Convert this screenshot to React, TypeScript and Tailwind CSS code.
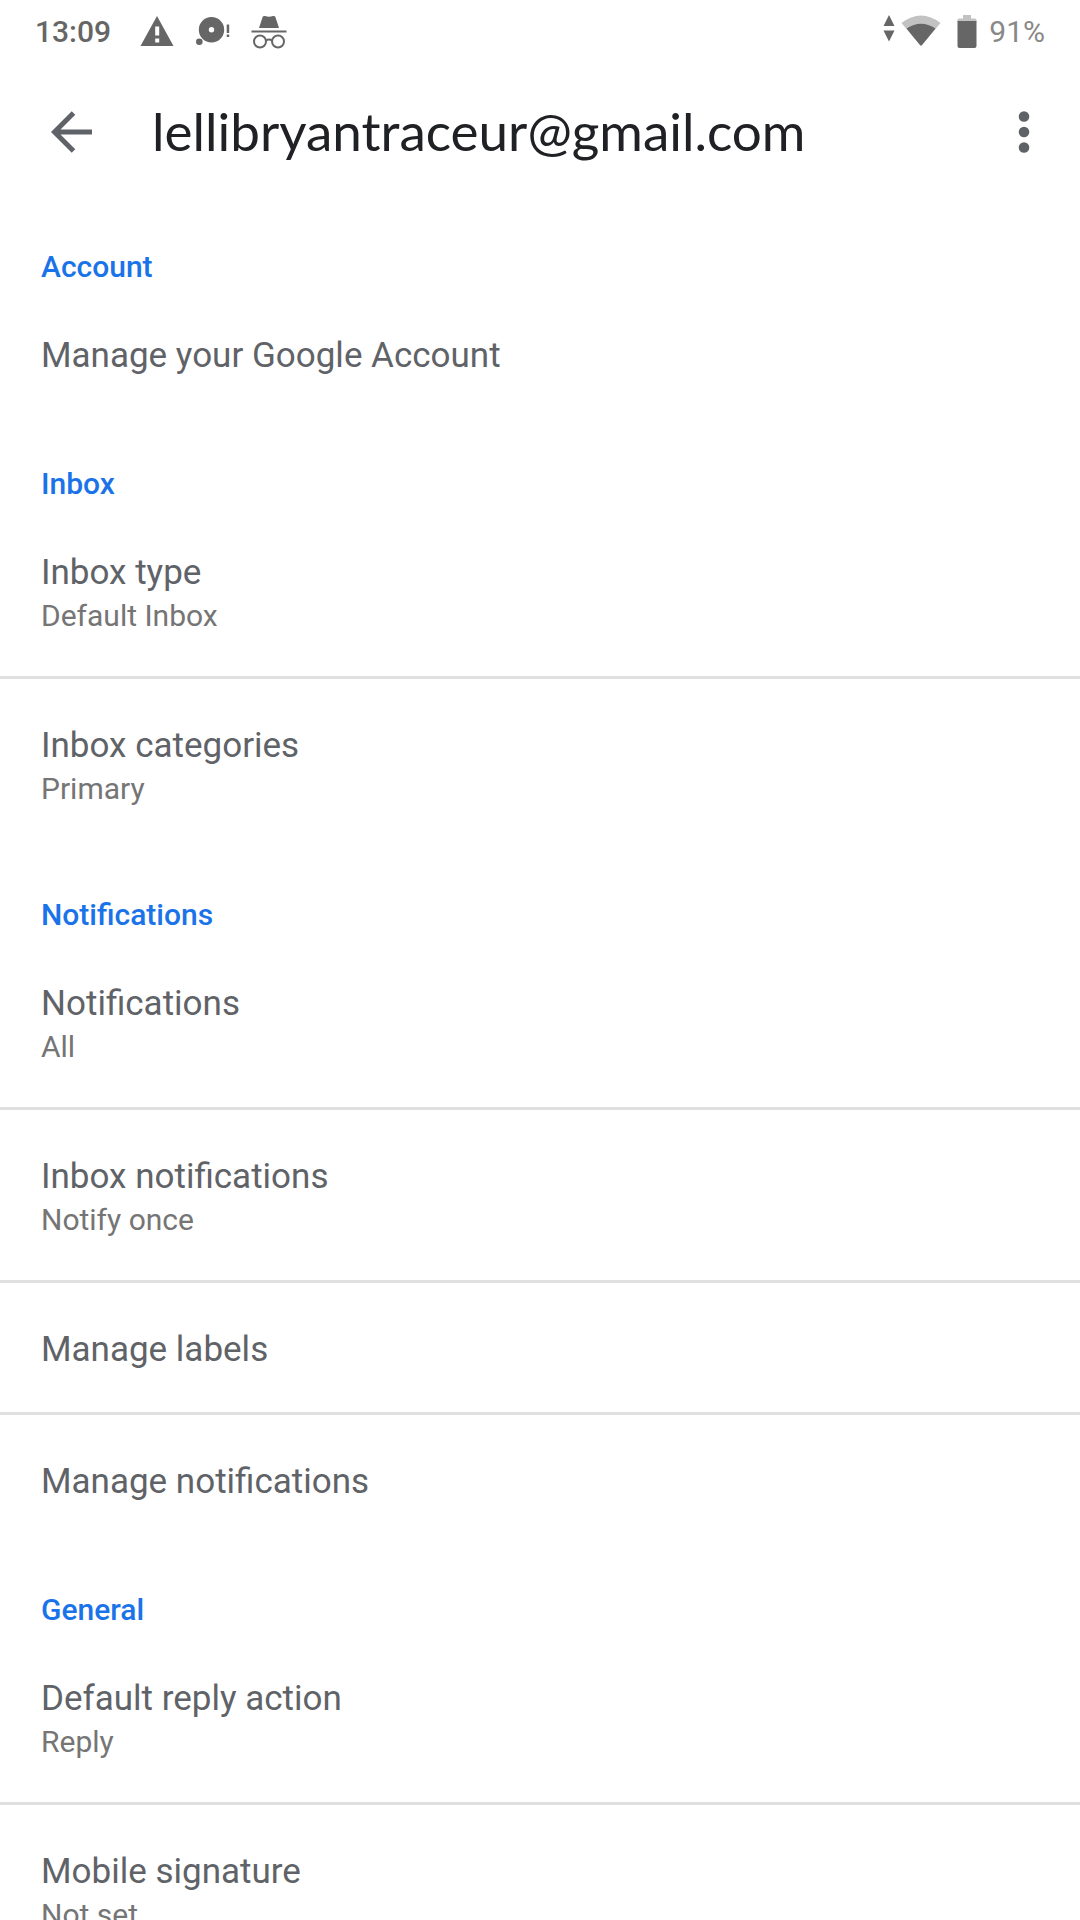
type Item = {
  title: string
  summary?: string
}

type Section = {
  heading: string
  items: Item[]
}

const sections: Section[] = [
  {
    heading: "Account",
    items: [{ title: "Manage your Google Account" }],
  },
  {
    heading: "Inbox",
    items: [
      { title: "Inbox type", summary: "Default Inbox" },
      { title: "Inbox categories", summary: "Primary" },
    ],
  },
  {
    heading: "Notifications",
    items: [
      { title: "Notifications", summary: "All" },
      { title: "Inbox notifications", summary: "Notify once" },
      { title: "Manage labels" },
      { title: "Manage notifications" },
    ],
  },
  {
    heading: "General",
    items: [
      { title: "Default reply action", summary: "Reply" },
      { title: "Mobile signature", summary: "Not set" },
    ],
  },
]

const StatusBar = () => (
  <div className="flex h-[63px] shrink-0 items-center justify-between px-[35px] text-[30px] leading-[36px] text-[#666666]">
    <div className="flex items-center">
      <span className="font-medium">13:09</span>
      <svg className="ml-[29px] h-[34px] w-[34px]" viewBox="0 0 34 34" fill="currentColor">
        <path d="M17 1 33.500 31H.5z" />
        <path d="M15.200 11.500h4v9h-4zM15.200 23.500h4v4h-4z" fill="#fff" />
      </svg>
      <svg className="ml-[22px] h-[34px] w-[34px]" viewBox="0 0 34 34" fill="currentColor">
        <path
          fillRule="evenodd"
          d="M15.500 2a12.700 12.700 0 1 1 0 25.400 12.700 12.700 0 0 1 0-25.400zm0 10a2.700 2.700 0 1 0 0 5.400 2.700 2.700 0 0 0 0-5.400z"
        />
        <circle cx="3.300" cy="26.800" r="3.300" />
        <path d="M30.700 9.500h2.500v8.500h-2.500zM30.700 19.500h2.500v2.500h-2.500z" />
      </svg>
      <svg className="ml-[21px] h-[34px] w-[36px]" viewBox="0 0 36 34" fill="none" stroke="currentColor" strokeWidth="2">
        <path
          d="M8 13 11.700 1.700Q12.500 .5 14 1.100q4 1.400 8 0 1.500-.6 2.300.6L28 13z"
          fill="currentColor"
          stroke="none"
        />
        <path d="M.5 16.500h35" />
        <circle cx="9" cy="26.500" r="6" />
        <circle cx="27" cy="26.500" r="6" />
        <path d="M15 25.500q3-1.800 6 0" />
      </svg>
    </div>
    <div className="flex items-center">
      <svg className="h-[34px] w-[12px]" viewBox="0 0 12 34" fill="currentColor">
        <path d="M6 0 11.500 11H.5zM6 26.500.5 15.500h11z" />
      </svg>
      <svg className="ml-[6px] h-[34px] w-[40px]" viewBox="0 0 40 34" fill="currentColor">
        <path d="M.5 8Q20-7 39.500 8L21 30q-1 1-2 0z" fill="#c2c2c2" />
        <path d="M5.500 13.500Q20 4 34.500 13.500L21 30q-1 1-2 0z" />
      </svg>
      <svg className="ml-4 h-[34px] w-[20px]" viewBox="0 0 20 34" fill="currentColor">
        <path d="M6 0h8v3.500h4q1.500 0 1.500 1.500v2H.5V5Q.5 3.500 2 3.500h4z" fill="#c2c2c2" />
        <path d="M.5 6h19v25q0 2-2 2h-15q-2 0-2-2z" />
      </svg>
      <span className="ml-3 text-[#888888]">91%</span>
    </div>
  </div>
)

const Toolbar = () => (
  <header className="flex h-[138px] shrink-0 items-center px-6 text-[#5f6368]">
    <button type="button" aria-label="Navigate up" className="flex h-24 w-24 items-center justify-center">
      <svg className="h-[42px] w-[42px]" viewBox="0 0 42 42" fill="none" stroke="currentColor" strokeWidth="5">
        <path d="M41 21H4M22.500 2 3.500 21l19 19" />
      </svg>
    </button>
    <h1 className="ml-8 flex-1 truncate pb-0.5 font-[Lato,sans-serif] text-[53px] leading-[72px] text-[#202124]">
      lellibryantraceur@gmail.com
    </h1>
    <button type="button" aria-label="More options" className="flex h-24 w-16 items-center justify-center">
      <svg className="h-[42px] w-[12px]" viewBox="0 0 12 42" fill="currentColor">
        <circle cx="6" cy="5.500" r="5.300" />
        <circle cx="6" cy="21" r="5.300" />
        <circle cx="6" cy="36.500" r="5.300" />
      </svg>
    </button>
  </header>
)

const SettingItem = ({ title, summary }: Item) => (
  <li>
    <button
      type="button"
      className={`block w-full px-[41px] pt-[45px] text-left ${summary ? "pb-[39px]" : "pb-10"}`}
    >
      <span className="block text-[35px] leading-[44px] text-[#5f6368]">{title}</span>
      {summary && <span className="block text-[30px] leading-[42px] text-[#757575]">{summary}</span>}
    </button>
  </li>
)

const App = () => {
  return (
    <div className="flex h-screen flex-col bg-white font-[Roboto,sans-serif]">
      <StatusBar />
      <Toolbar />
      <main className="min-h-0 flex-1 overflow-y-auto [scrollbar-width:none]">
        {sections.map((section) => (
          <section key={section.heading}>
            <h2 className="px-[41px] pt-11 text-[30px] font-medium leading-[44px] text-[#1a73e8]">
              {section.heading}
            </h2>
            <ul className="divide-y-[3px] divide-[#e0e0e0]">
              {section.items.map((item) => (
                <SettingItem key={item.title} {...item} />
              ))}
            </ul>
          </section>
        ))}
      </main>
    </div>
  )
}

export default App
